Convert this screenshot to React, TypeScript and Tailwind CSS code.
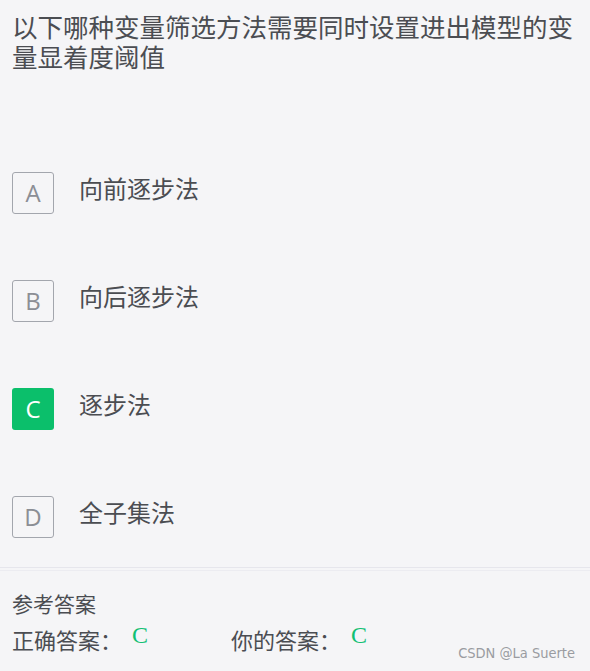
const OPTIONS = [
  { key: "A", text: "向前逐步法" },
  { key: "B", text: "向后逐步法" },
  { key: "C", text: "逐步法" },
  { key: "D", text: "全子集法" },
];

const SELECTED = "C";

export default function App() {
  return (
    <div
      className="w-[590px] h-[671px] bg-[#f5f5f7] text-[#4b4d52] overflow-hidden flex flex-col relative"
      style={{ fontFamily: '"Noto Sans CJK SC", "Noto Sans", sans-serif' }}
    >
      {/* Question */}
      <div className="ml-[12px] w-[570px] pt-[11px] text-[25.5px] leading-[30px]">
        以下哪种变量筛选方法需要同时设置进出模型的变量显着度阈值
      </div>

      {/* Options */}
      <div className="flex flex-col gap-[66px] px-[12px] pt-[101px]">
        {OPTIONS.map((o) => {
          const active = o.key === SELECTED;
          return (
            <div key={o.key} className="flex items-center h-[42px]">
              <div
                className={`w-[42px] h-[42px] rounded-[3px] flex items-center justify-center text-[24px] shrink-0 ${
                  active
                    ? "bg-[#0bbf6b] text-white"
                    : "border border-[#a3a6ad] text-[#8b8e95]"
                }`}
                style={{ fontFamily: '"Open Sans", "Noto Sans", sans-serif' }}
              >
                {o.key}
              </div>
              <div className="ml-[25px] text-[24px] text-[#4b4d52] -mt-[10px]">
                {o.text}
              </div>
            </div>
          );
        })}
      </div>

      {/* Answer */}
      <div className="mt-auto border-t border-[#e6e6ec] pt-[2px]">
        <div className="border-t border-[#ececf1] px-[12px] pt-[17px] pb-[17px]">
          <div className="text-[21px] leading-[30px]">参考答案</div>
          <div className="flex items-center mt-[6px] text-[22px] leading-[30px]">
            <div className="w-[219px] flex items-center">
              <span>正确答案：</span>
              <span
                className="text-[#12c074] text-[24px] -mt-[8px] ml-[10px]"
                style={{ fontFamily: '"Liberation Serif", serif' }}
              >
                C
              </span>
            </div>
            <div className="flex items-center">
              <span>你的答案：</span>
              <span
                className="text-[#12c074] text-[24px] -mt-[8px] ml-[10px]"
                style={{ fontFamily: '"Liberation Serif", serif' }}
              >
                C
              </span>
            </div>
          </div>
        </div>
      </div>

      <div
        className="absolute right-[15px] bottom-[6px] text-[14.5px] text-[#9a9ca1]"
        style={{ fontFamily: '"DejaVu Sans Condensed", "Liberation Sans", sans-serif' }}
      >
        CSDN @La Suerte
      </div>
    </div>
  );
}
